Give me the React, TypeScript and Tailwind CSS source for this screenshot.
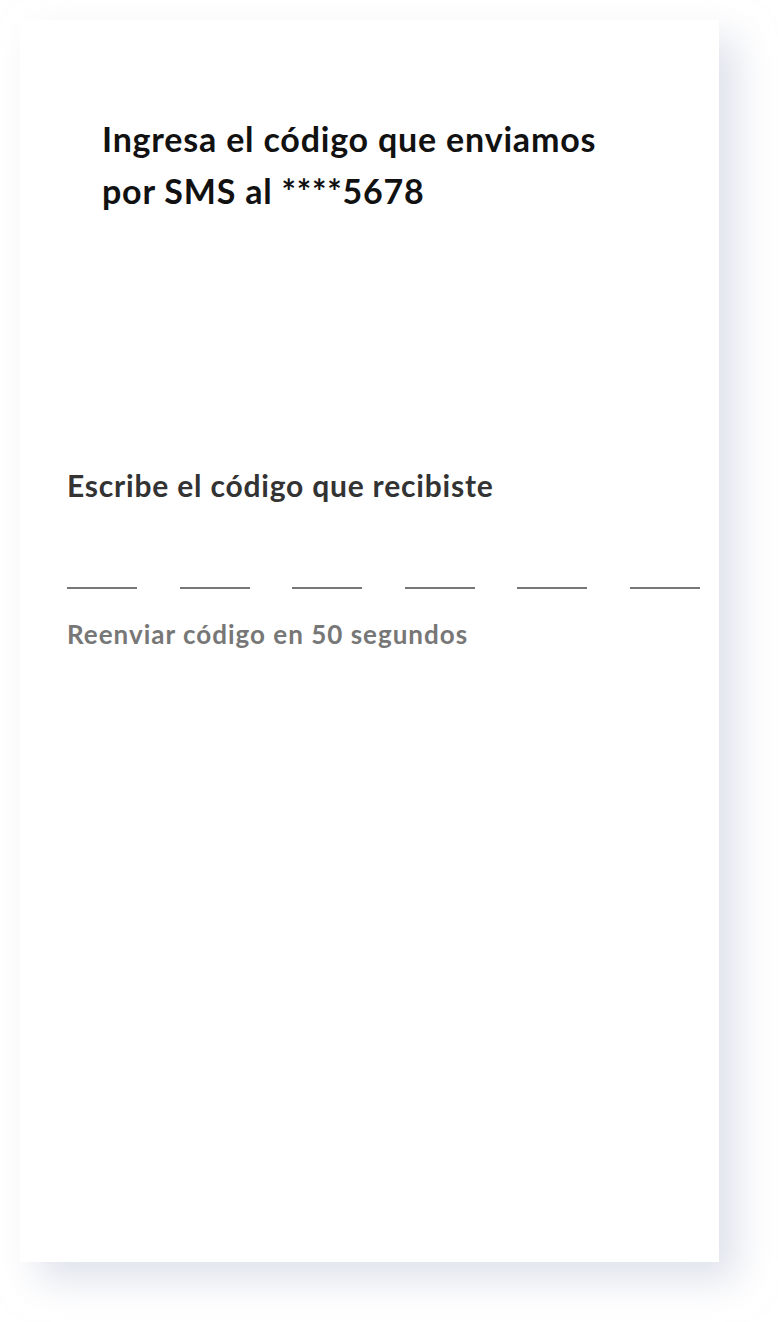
export default function App() {
  const slots = [0, 1, 2, 3, 4, 5]

  return (
    <div className="min-h-screen bg-white pt-5 pl-5" style={{ fontFamily: "Lato, 'Open Sans', sans-serif" }}>
      <div className="h-[1242px] w-[699px] bg-white shadow-[18px_18px_36px_rgba(196,203,218,0.55)]">
        <div className="pl-[82px] pt-[93px]">
          <h1 className="text-[34px] font-bold leading-[52px] tracking-[0.8px] text-[#111]">
            Ingresa el código que enviamos
            <br />
            por SMS al ****5678
          </h1>
        </div>

        <div className="pl-[47px] pt-[250px] pr-[19px]">
          <p className="text-[30px] font-bold leading-9 tracking-[0.8px] text-[#333]">Escribe el código que recibiste</p>

          <div className="mt-[84px] flex justify-between">
            {slots.map((i) => (
              <div key={i} className="h-[2px] w-[70px] bg-[#777]" />
            ))}
          </div>

          <p className="mt-[29px] text-[26px] font-bold leading-8 tracking-[1px] text-[#777]">
            Reenviar código en 50 segundos
          </p>
        </div>
      </div>
    </div>
  )
}
